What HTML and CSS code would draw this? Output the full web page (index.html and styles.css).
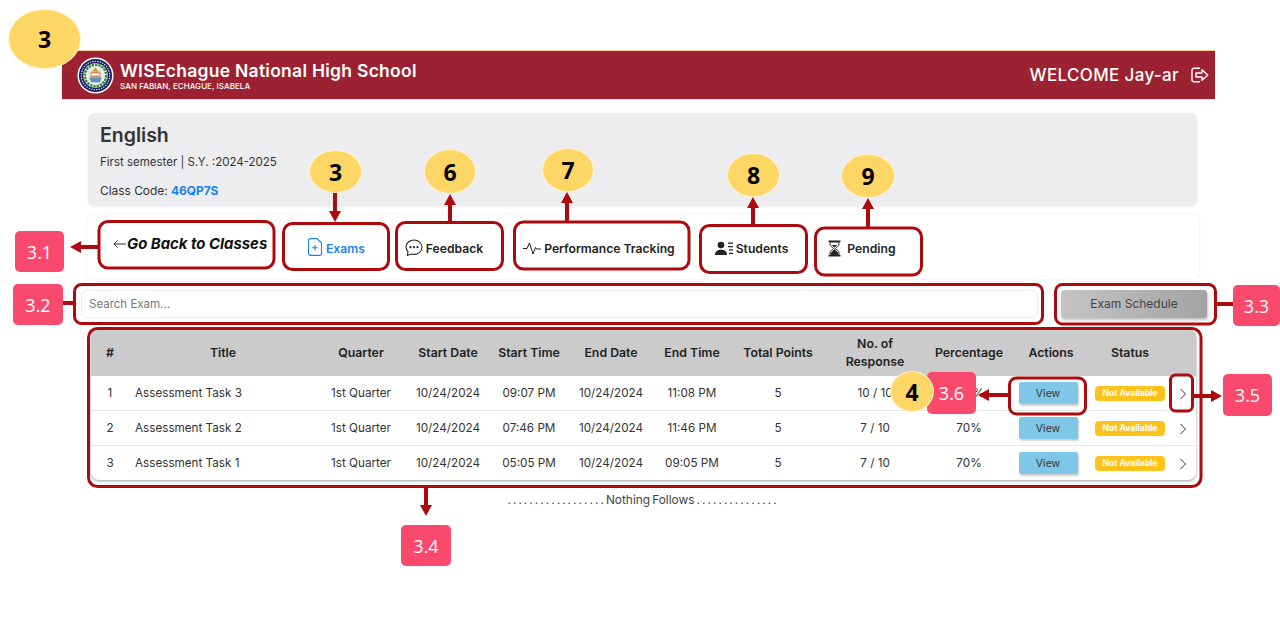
FILE: index.html
```html
<!DOCTYPE html>
<html lang="en">
<head>
  <meta charset="UTF-8" />
  <meta name="viewport" content="width=device-width, initial-scale=1.0"/>
  <title>Class Exams</title>
  <link rel="stylesheet" href="styles.css">
</head>
<body>
  <div class="app">
    <header class="topbar">
      <div class="brand">
        <svg class="logo" viewBox="0 0 38 38">
          <circle cx="19" cy="19" r="18.5" fill="#fff"/>
          <circle cx="19" cy="19" r="17" fill="#1a1f5e"/>
          <circle cx="19" cy="19" r="14.6" fill="none" stroke="#dfe0ee" stroke-width="1.2" stroke-dasharray="1.4 1.2"/>
          <circle cx="19" cy="19" r="12.6" fill="#f1efe4"/>
          <circle cx="19" cy="19" r="11" fill="none" stroke="#2f8a45" stroke-width="2.6" stroke-dasharray="2.4 1"/>
          <circle cx="19" cy="19" r="8" fill="#dfe6e4"/>
          <path d="M19 10.5l3 4.5h-6z" fill="#e09a2b"/>
          <rect x="14" y="15" width="10" height="6" fill="#d98a5c"/>
          <path d="M12.5 21h13l-2 5h-9z" fill="#5b8fc4"/>
          <path d="M15 17h8v2h-8z" fill="#fff"/>
        </svg>
        <div class="brand-text">
          <h1>WISEchague National High School</h1>
          <p>SAN FABIAN, ECHAGUE, ISABELA</p>
        </div>
      </div>
      <div class="user">
        <span>WELCOME Jay-ar</span>
        <svg class="logout" viewBox="0 0 18 16" fill="none" stroke="#fff" stroke-width="1.4">
          <path d="M9 1.2H3a2 2 0 0 0-2 2v9.600a2 2 0 0 0 2 2h6"/>
          <path d="M5 6h6V2.800L16.800 8 11 13.200V10H5z" stroke-linejoin="round"/>
        </svg>
      </div>
    </header>

    <section class="class-card">
      <h2>English</h2>
      <p>First semester | S.Y. :2024-2025</p>
      <p class="code">Class Code: <b>46QP7S</b></p>
    </section>

    <nav class="tabs">
      <a class="back"><svg class="back-arrow" viewBox="0 0 14 10" fill="none" stroke="#222" stroke-width="1"><path d="M14 5H1M5 1L1 5l4 4"/></svg>Go Back to Classes</a>
      <a class="tab active">
        <svg class="icon file" viewBox="0 0 14 18" fill="none" stroke="#1a7ff0" stroke-width="1.1"><path d="M9 .6H2.500a2 2 0 0 0-2 2v12.800a2 2 0 0 0 2 2h9a2 2 0 0 0 2-2V5z"/><path d="M7 7v5.600M4.200 9.800h5.600"/></svg>
        Exams
      </a>
      <a class="tab">
        <svg class="icon chat" viewBox="0 0 18 18" fill="none" stroke="#222" stroke-width="1.1"><path d="M9 1C4.600 1 1 4.100 1 8c0 1.800.8 3.500 2 4.700L2.400 16.500l4-1.500c.8.200 1.700.400 2.600.400 4.400 0 8-3.200 8-7.200S13.400 1 9 1z"/><circle cx="5.500" cy="8.200" r="1.100" fill="#222" stroke="none"/><circle cx="9" cy="8.200" r="1.100" fill="#222" stroke="none"/><circle cx="12.500" cy="8.200" r="1.100" fill="#222" stroke="none"/></svg>
        Feedback
      </a>
      <a class="tab">
        <svg class="icon" viewBox="0 0 18 14" fill="none" stroke="#222" stroke-width="1"><path d="M0 7h4L6.500 1.500 10 12.500 12.500 6l1 1.500H18"/></svg>
        Performance Tracking
      </a>
      <a class="tab">
        <svg class="icon" viewBox="0 0 18 14" fill="#222"><circle cx="6" cy="3.500" r="3.300"/><path d="M0 13.500c0-3.500 2.500-5.200 6-5.200s6 1.700 6 5.200z"/><path d="M13 1h5v1.300h-5zM13 4.400h5v1.300h-5zM14 7.800h4v1.300h-4zM14 11.200h4v1.300h-4z"/></svg>
        Students
      </a>
      <a class="tab">
        <svg class="icon glass" viewBox="0 0 13 17"><path d="M.5.500h12v1.600h-12zM.5 14.900h12v1.600h-12z" fill="#222"/><path d="M2 2v2c0 2.500 3 3.500 3.500 4.500C5 9.500 2 10.500 2 13v2h9v-2c0-2.500-3-3.500-3.500-4.500C8 7.500 11 6.500 11 4V2z" fill="#fff" stroke="#222"/><path d="M3 15v-2c0-1.500 3.500-3 3.500-4.500C6.500 10 10 11.500 10 13v2zM3.800 5h5.400L6.500 7.800z" fill="#222"/></svg>
        Pending
      </a>
    </nav>

    <div class="tools">
      <input class="search" type="text" placeholder="Search Exam...">
      <button class="schedule">Exam Schedule</button>
    </div>

    <div class="table-wrap">
      <table>
        <colgroup>
          <col class="c-num"><col class="c-title"><col class="c-quarter"><col class="c-sdate"><col class="c-stime"><col class="c-edate"><col class="c-etime"><col class="c-points"><col class="c-resp"><col class="c-pct"><col class="c-act"><col class="c-status"><col class="c-more">
        </colgroup>
        <thead>
          <tr><th>#</th><th>Title</th><th>Quarter</th><th>Start Date</th><th>Start Time</th><th>End Date</th><th>End Time</th><th>Total Points</th><th>No. of Response</th><th>Percentage</th><th>Actions</th><th>Status</th><th></th></tr>
        </thead>
        <tbody>
          <tr>
            <td>1</td><td class="title">Assessment Task 3</td><td>1st Quarter</td><td>10/24/2024</td><td>09:07 PM</td><td>10/24/2024</td><td>11:08 PM</td><td>5</td><td>10 / 10</td><td>100%</td>
            <td><button class="view">View</button></td><td><span class="badge">Not Available</span></td>
            <td><svg class="chev" viewBox="0 0 8 12" fill="none" stroke="#333" stroke-width="1"><path d="M1.500 1l5 5-5 5"/></svg></td>
          </tr>
          <tr>
            <td>2</td><td class="title">Assessment Task 2</td><td>1st Quarter</td><td>10/24/2024</td><td>07:46 PM</td><td>10/24/2024</td><td>11:46 PM</td><td>5</td><td>7 / 10</td><td>70%</td>
            <td><button class="view">View</button></td><td><span class="badge">Not Available</span></td>
            <td><svg class="chev" viewBox="0 0 8 12" fill="none" stroke="#333" stroke-width="1"><path d="M1.500 1l5 5-5 5"/></svg></td>
          </tr>
          <tr>
            <td>3</td><td class="title">Assessment Task 1</td><td>1st Quarter</td><td>10/24/2024</td><td>05:05 PM</td><td>10/24/2024</td><td>09:05 PM</td><td>5</td><td>7 / 10</td><td>70%</td>
            <td><button class="view">View</button></td><td><span class="badge">Not Available</span></td>
            <td><svg class="chev" viewBox="0 0 8 12" fill="none" stroke="#333" stroke-width="1"><path d="M1.500 1l5 5-5 5"/></svg></td>
          </tr>
        </tbody>
      </table>
    </div>
    <p class="end-note">. . . . . . . . . . . . . . . . . . Nothing Follows . . . . . . . . . . . . . . .</p>
  </div>

  <!-- annotations drawn over the screenshot -->
  <svg class="marks" viewBox="0 0 1280 644">
    <g class="frames">
      <rect x="99" y="221.500" width="175" height="46.500" rx="9"/>
      <rect x="283.500" y="223.500" width="105" height="46" rx="9"/>
      <rect x="396.500" y="222.500" width="106" height="47" rx="9"/>
      <rect x="514.500" y="222" width="174.500" height="47" rx="9"/>
      <rect x="700.500" y="225.500" width="106" height="47" rx="9"/>
      <rect x="815.500" y="228" width="106" height="47" rx="9"/>
      <rect x="74.500" y="284.500" width="968" height="39" rx="7"/>
      <rect x="1055.500" y="284.500" width="160" height="39.500" rx="7"/>
      <rect x="88.500" y="328.500" width="1112.500" height="158" rx="9"/>
      <rect x="1009.500" y="378" width="76" height="36" rx="7"/>
      <rect x="1170.500" y="375" width="22" height="36" rx="5"/>
    </g>
    <g class="arrows">
      <path d="M98 247H78M63 303H73M1217 304H1233M335 193v20M450 221v-17M567 221v-18M753 224v-17M868 227v-19M426 488v18M1008 395H986M1194 396h18"/>
      <path d="M70 247l11-6v12zM335 222l-6-11h12zM450 194l-6 11h12zM567 192l-6 11h12zM753 197l-6 11h12zM868 198l-6 11h12zM426 516l-6-11h12zM978 395l11-6v12zM1222 396l-11-6v12z" class="heads"/>
    </g>
  </svg>

  <span class="dot dot-main">3</span>
  <span class="dot dot-exams">3</span>
  <span class="dot dot-feedback">6</span>
  <span class="dot dot-perf">7</span>
  <span class="dot dot-students">8</span>
  <span class="dot dot-pending">9</span>
  <span class="tag tag-31">3.1</span>
  <span class="tag tag-32">3.2</span>
  <span class="tag tag-33">3.3</span>
  <span class="tag tag-34">3.4</span>
  <span class="tag tag-35">3.5</span>
  <span class="tag tag-36">3.6</span>
  <span class="dot dot-view">4</span>
</body>
</html>
```

FILE: styles.css
```css
body {
  margin: 0;
  height: 644px;
  overflow: hidden;
  background: #fff;
  font-family: Inter, "Liberation Sans", sans-serif;
  color: #333;
  position: relative;
}
.app {
  width: 1153px;
  margin: 50px 0 0 62px;
}

/* header */
.topbar {
  height: 48px;
  background: #9c2232;
  border-top: 1px solid #edc9a9;
  box-shadow: 0 1px 2px rgba(0, 0, 0, 0.12);
  display: flex;
  align-items: center;
  justify-content: space-between;
  padding: 0 6px 0 15px;
  color: #fff;
}
.brand {
  display: flex;
  align-items: center;
  gap: 6px;
}
.logo {
  width: 37px;
  height: 37px;
}
.brand-text h1 {
  margin: 0;
  font-size: 17.500px;
  line-height: 21px;
  font-weight: 600;
  letter-spacing: 0.27px;
}
.brand-text p {
  margin: 0;
  font-size: 8px;
  line-height: 10px;
  font-weight: 500;
  letter-spacing: 0.05px;
}
.user {
  display: flex;
  align-items: center;
  gap: 12px;
  font-size: 17px;
  font-weight: 500;
  letter-spacing: 0.35px;
}
.logout {
  width: 18px;
  height: 16px;
}

/* class card */
.class-card {
  height: 93px;
  margin: 14px 18px 0 26px;
  padding: 10px 12px;
  box-sizing: border-box;
  background: #edecee;
  border-radius: 7px;
  box-shadow: 0 1px 3px rgba(0, 0, 0, 0.08);
}
.class-card h2 {
  margin: 0;
  font-size: 19.500px;
  line-height: 24px;
  font-weight: 600;
}
.class-card p {
  margin: 7px 0 0;
  font-size: 11.500px;
  line-height: 16px;
}
.class-card .code {
  margin-top: 13px;
  font-size: 11.900px;
}
.class-card b {
  color: #1a7ff0;
  font-weight: 700;
}

/* tabs */
.tabs {
  height: 64px;
  margin: 9px 16px 0 25px;
  padding: 0 0 0 26px;
  display: flex;
  align-items: center;
  background: #fff;
  border-radius: 7px;
  box-shadow: 0 0 3px rgba(0, 0, 0, 0.1);
  gap: 8px;
}
.back {
  width: 154px;
  margin: -6px 17px 0 0;
  display: flex;
  align-items: center;
  gap: 1px;
  font-size: 14.900px;
  font-weight: 700;
  font-style: italic;
  color: #111;
  white-space: nowrap;
}
.back-arrow {
  width: 13px;
  height: 10px;
  flex: none;
}
.tab {
  height: 39px;
  padding: 0 16px;
  margin-top: 2px;
  display: flex;
  align-items: center;
  gap: 3px;
  font-size: 12.150px;
  font-weight: 600;
  color: #222;
  white-space: nowrap;
}
.tab.active {
  color: #1a7ff0;
  height: 41px;
  margin-top: 4px;
  box-sizing: border-box;
  border-bottom: 1px solid #1a7ff0;
  border-radius: 0 0 4px 4px;
}
.icon {
  width: 18px;
  height: 17px;
}
.icon.file {
  width: 14px;
  height: 18px;
  margin: -4px 1px 0 0;
}
.icon.chat {
  height: 18px;
  margin-top: -1px;
}
.icon.glass {
  width: 13px;
  height: 17px;
  margin: 0 3px 0 0;
}

/* search row */
.tools {
  margin: 11px 8px 0 19px;
  display: flex;
  justify-content: space-between;
}
.search {
  width: 957px;
  height: 28px;
  box-sizing: border-box;
  padding: 0 7px;
  border: 1px solid #ececec;
  border-radius: 6px;
  font-family: inherit;
  font-size: 11.500px;
}
.search::placeholder {
  color: #777;
}
.schedule {
  width: 146px;
  height: 28px;
  padding: 0 0 2px;
  border: 0;
  border-radius: 3px;
  background: linear-gradient(90deg, #c4c4c4, #a3a3a3);
  box-shadow: 1px 2px 3px rgba(0, 0, 0, 0.25);
  font-family: inherit;
  font-size: 12px;
  color: #444;
}

/* table */
.table-wrap {
  width: 1105px;
  margin: 12px 0 0 29px;
  border-radius: 6px 6px 8px 8px;
  overflow: hidden;
  box-shadow: 0 1px 3px rgba(0, 0, 0, 0.4);
}
table {
  width: 100%;
  border-collapse: collapse;
  table-layout: fixed;
  font-size: 11.700px;
}
.c-num { width: 38px; }
.c-title { width: 188px; }
.c-quarter { width: 88px; }
.c-sdate { width: 86px; }
.c-stime { width: 76px; }
.c-edate { width: 88px; }
.c-etime { width: 74px; }
.c-points { width: 98px; }
.c-resp { width: 96px; }
.c-pct { width: 92px; }
.c-act { width: 72px; }
.c-status { width: 86px; }
.c-more { width: 23px; }
th {
  height: 46px;
  padding: 0 4px;
  background: #cbcbcb;
  font-size: 12.300px;
  font-weight: 600;
  line-height: 18px;
  color: #222;
}
td {
  height: 34px;
  padding: 0;
  text-align: center;
  border-bottom: 1px solid #e9e9e9;
  color: #333;
}
tbody tr:last-child td {
  border-bottom: 0;
}
td.title {
  text-align: left;
  padding-left: 6px;
}
.view {
  width: 59px;
  height: 22px;
  margin-right: 6px;
  border: 0;
  border-radius: 2px;
  background: #7fc7e6;
  box-shadow: 1px 2px 2px rgba(0, 0, 0, 0.2);
  font-family: inherit;
  font-size: 10.500px;
  color: #333;
  vertical-align: middle;
}
.badge {
  display: inline-block;
  width: 70px;
  line-height: 15px;
  border-radius: 4px;
  background: #fdc21c;
  color: #fff;
  font-size: 8.500px;
  font-weight: 700;
  white-space: nowrap;
}
.chev {
  width: 8px;
  height: 12px;
  margin-right: 4px;
  vertical-align: middle;
}
.end-note {
  width: 1160px;
  margin: 13px 0 0;
  text-align: center;
  font-size: 11.900px;
  line-height: 14px;
  word-spacing: -1.300px;
  color: #444;
}

/* annotation layer */
.marks {
  position: absolute;
  left: 0;
  top: 0;
  width: 1280px;
  height: 644px;
}
.frames rect {
  fill: none;
  stroke: #ad0a0f;
  stroke-width: 3;
}
.arrows path {
  fill: none;
  stroke: #ad0a0f;
  stroke-width: 4;
}
.arrows .heads {
  fill: #ad0a0f;
  stroke: none;
}
.dot {
  position: absolute;
  display: flex;
  align-items: center;
  justify-content: center;
  box-sizing: border-box;
  border: 1px solid #fff2cc;
  border-radius: 50%;
  background: #fdd666;
  color: #000;
  font-family: "Open Sans", sans-serif;
  font-size: 23px;
  font-weight: 700;
}
.dot-main { left: 8px; top: 9px; width: 73px; height: 60px; }
.dot-exams { left: 309px; top: 150px; width: 53px; height: 43px; }
.dot-feedback { left: 424px; top: 149px; width: 52px; height: 45px; }
.dot-perf { left: 542px; top: 148px; width: 52px; height: 44px; }
.dot-students { left: 727px; top: 153px; width: 53px; height: 44px; }
.dot-pending { left: 841px; top: 154px; width: 54px; height: 44px; }
.dot-view { left: 890px; top: 371px; width: 44px; height: 41px; }
.tag {
  position: absolute;
  width: 49px;
  height: 41px;
  display: flex;
  align-items: center;
  justify-content: center;
  border-radius: 5px;
  background: #f9496d;
  color: #fff;
  font-family: "Open Sans", sans-serif;
  font-size: 18px;
}
.tag-31 { left: 15px; top: 231px; }
.tag-32 { left: 13px; top: 284px; width: 50px; }
.tag-33 { left: 1233px; top: 285px; width: 47px; }
.tag-34 { left: 401px; top: 525px; width: 50px; }
.tag-35 { left: 1223px; top: 374px; height: 42px; }
.tag-36 { left: 927px; top: 372px; height: 42px; }
```
